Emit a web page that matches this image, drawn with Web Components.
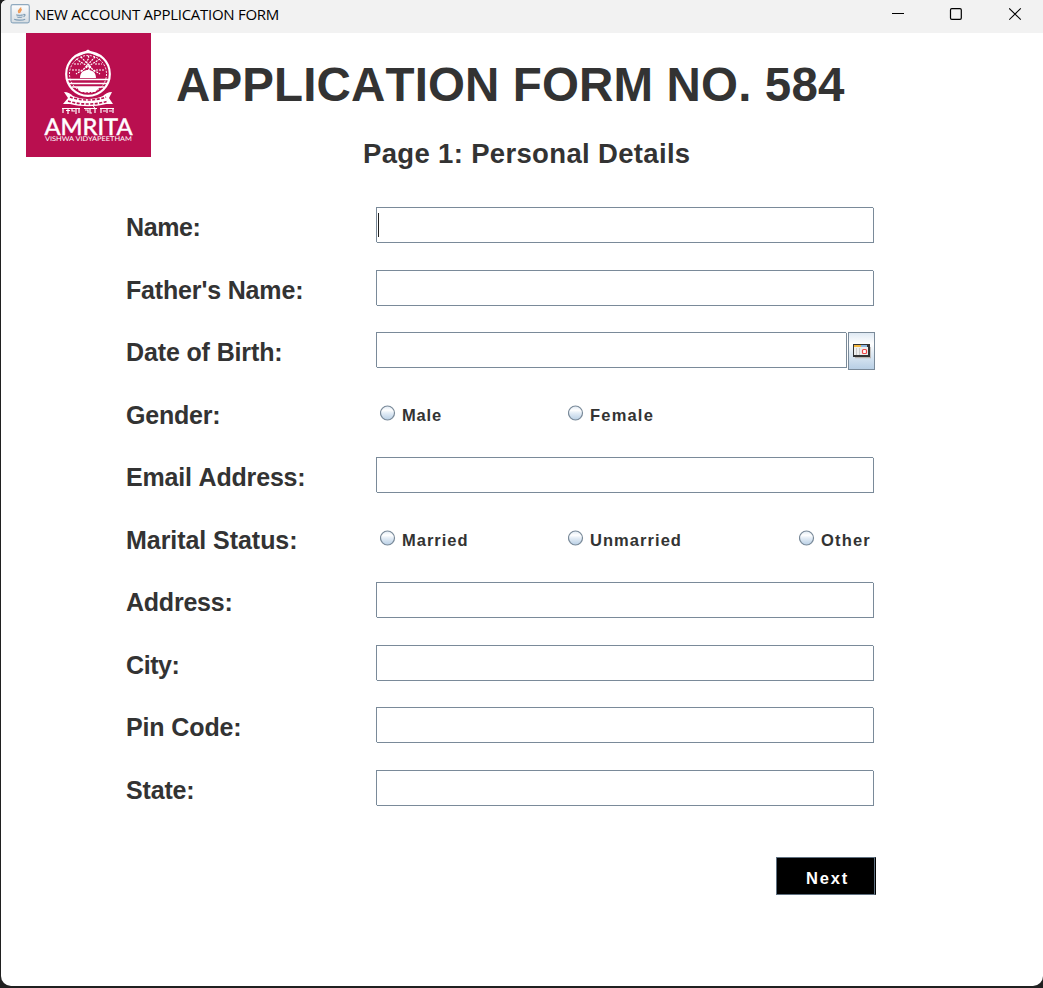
<!DOCTYPE html>
<html lang="en">
<head>
<meta charset="utf-8">
<title>NEW ACCOUNT APPLICATION FORM</title>
<style>
html,body{margin:0;height:100%;background:#202020;overflow:hidden}
body{font-family:"Liberation Sans",Arial,sans-serif;color:#333}
</style>
</head>
<body>
<app-window></app-window>
<script>
const define = (name, html, setup) => customElements.define(name, class extends HTMLElement {
  connectedCallback() {
    if (this.shadowRoot) return;
    const t = document.createElement('template');
    t.innerHTML = typeof html === 'function' ? html(this) : html;
    this.attachShadow({mode: 'open'}).append(t.content.cloneNode(true));
    if (setup) setup(this);
  }
});

/* Text tracked so that its advance equals the width attribute. */
define('tracked-text', `<style>:host{display:block;white-space:pre;font-kerning:none;font-weight:bold}span{display:inline-block}</style><span><slot></slot></span>`, el => {
  const s = el.shadowRoot.querySelector('span');
  const w = s.getBoundingClientRect().width;
  s.style.letterSpacing = ((+el.getAttribute('width') - w) / el.textContent.length).toFixed(3) + 'px';
});

define('java-icon', `<style>:host{display:block;width:20px;height:20px}svg{display:block}</style>
<svg width="20" height="20" viewBox="0 0 20 20" fill="none">
<defs><linearGradient id="g" x2="0" y2="1"><stop stop-color="#fdfdfd"/><stop offset="1" stop-color="#d5dce2"/></linearGradient></defs>
<rect x="1" y=".7" width="18.3" height="18.2" rx="1.8" fill="url(#g)" stroke="#8fa9bf" stroke-width="1.2"/>
<path d="M10.600 3.500c.8 1.800-3 2.600-2 4.400.3.600.6.800.7 1.200M11.800 5.500c-2 1-2 1.600-1.200 2.800" stroke="#ee9a55" stroke-width="1.500"/>
<path d="M6 10.300c1.700.6 5.500.5 7 0l-.8 3.200c-1.300.7-3.700.7-5 0z" fill="#8ba6bb"/>
<path d="M6.500 12.200c1.500.5 4.500.4 6 0" stroke="#dfe6ec" stroke-width=".8"/>
<path d="M4.200 15.300c2.500 1.200 8.500 1.100 11-.1M13.300 10.600c2-.7 2.600 1 .2 2" stroke="#7f9db5" stroke-width="1.200"/>
</svg>`);

define('window-bar', `<style>
:host{display:flex;height:33px;background:#f2f2f2;align-items:flex-start;box-sizing:border-box;padding:4px 21px 0 9px}
.t{font:15px/20px "Open Sans","Noto Sans",sans-serif;color:#000;margin-left:5px;flex:1}
tracked-text{font-weight:400}
svg{display:block}.c{display:flex;margin-top:4px}
svg+svg{margin-left:44px}svg:last-child{margin-left:47px}
</style>
<java-icon></java-icon><div class="t"><tracked-text width="244">NEW ACCOUNT APPLICATION FORM</tracked-text></div>
<div class="c">
<svg width="13" height="13"><path d="M0 5.500h12" stroke="#000"/></svg>
<svg width="13" height="13"><rect x="1.500" y=".6" width="10.800" height="10.800" rx="1.300" fill="none" stroke="#000" stroke-width="1.200"/></svg>
<svg width="13" height="13"><path d="M.2.400l11.600 11.300M11.800.400L.2 11.700" stroke="#000" stroke-width="1.100"/></svg>
</div>`);

define('amrita-logo', `<style>:host{display:block;width:125px;height:124px;background:#b90f4f}svg{display:block}</style>
<svg width="125" height="124" viewBox="0 0 125 124" fill="none" stroke="#fff">
<circle cx="62" cy="41" r="21.800" stroke-width="2.200"/>
<circle cx="62" cy="41" r="18.500" stroke-width="1" stroke-dasharray="2 1.400"/>
<path d="M51 23l7-3 4-2.500 4 2.500 7 3" stroke-width="1.800"/>
<path d="M62 23c3 3-4 5 0 8s3 4 0 6M50 26l24 15M74 26L50 41M55 24l14 15M69 24L55 39M46 37h8M70 37h8M48 31h7M69 31h7" stroke-width="1.200" stroke-dasharray="2 1"/>
<path d="M54 45c0-6 4-8 8-8s8 2 8 8zM50 54h24l-5 5H55z" fill="#fff" stroke="none"/>
<path d="M42 46.500h40M42 50.500h40M46 54h32" stroke-width="1.500"/>
<path d="M38 59c4 0 7 2 9 4 8 4 22 4 30 0 2-2 5-4 9-4l-3 6 4 6h-7c-11 3-25 3-36 0h-7l5-6z" fill="#fff" stroke="none"/>
<path d="M42 68c12 4 28 4 40 0M44 64c10 4 26 4 36 0" stroke="#b90f4f" stroke-width="1.600" stroke-dasharray="3 1.500"/>
<path d="M36 75.500h18M58 75.500h13M74 75.500h14M67 72.500l2 3" stroke-width="1"/>
<path d="M37 76v4M40 77.500h4M42 76v5M46 76v2h3M50 76v5M53 76v4M59 77h3v3M64 76v4h2M69 76v4M75 76v4M77 78h3M81 76v4M83 78h3M87 76v4" stroke-width="1.200"/>
<g fill="#fff" text-rendering="geometricPrecision">
<text x="18.500" y="102" textLength="88" lengthAdjust="spacingAndGlyphs" font-family="Lato,sans-serif" font-size="23" stroke-width=".5">AMRITA</text>
<text x="19" y="108.300" textLength="87" lengthAdjust="spacingAndGlyphs" font-family="Lato,sans-serif" font-size="6.500" stroke="none">VISHWA VIDYAPEETHAM</text></g>
</svg>`);

define('text-field', `<style>
:host{display:block;position:relative;box-sizing:border-box;width:498px;height:36px;border:1px solid #7a8a99;background:#fff;padding:5px 1px}
:host::before,:host::after{content:"";position:absolute;width:1px;height:1px;background:#eef1f4}
:host::before{right:-1px;top:-1px}:host::after{left:-1px;bottom:-1px}
i{display:none;width:1px;height:24px;background:#222}:host([focused]) i{display:block}
</style><i></i>`);

define('calendar-button', `<style>
:host{display:flex;box-sizing:border-box;width:27px;height:38px;border:1px solid #7a8a99;background:linear-gradient(#dfe9f3,#fff 30%,#e2ecf5 55%,#b8cfe5);align-items:center;justify-content:center}
svg{display:block;margin-top:1px}
</style>
<svg width="18" height="15"><path d="M2 13.500h16V3" stroke="#b9b4b0" fill="none" stroke-width="1.500"/><path d="M0 0h17v13H0z" fill="#333"/><path d="M1 3h14v8H1z" fill="#eee"/><path d="M1 1h7v2H1z" fill="#f3b73f"/><path d="M8 1h6v2H8z" fill="#8db6df"/><path d="M3.500 4v7M6.500 4v7" stroke="#ccc"/><rect x="9.500" y="5.500" width="4" height="4" rx="1" fill="#fff" stroke="#f04848" stroke-width="1.200"/></svg>`);

define('radio-option', el => `<style>
:host{display:flex;align-items:center;gap:6px;font-size:16.500px;line-height:20px}
svg{display:block;margin-top:-3px}
</style>
<svg width="16" height="16"><defs><linearGradient id="r" x2="0" y2="1"><stop stop-color="#dde8f3"/><stop offset=".3" stop-color="#fff"/><stop offset=".5" stop-color="#e4edf6"/><stop offset="1" stop-color="#b8cfe5"/></linearGradient></defs><circle cx="7.500" cy="8" r="7" fill="url(#r)" stroke="#7a8a99" stroke-width="1.200"/></svg>
<tracked-text width="${el.getAttribute('width')}">${el.getAttribute('label')}</tracked-text>`);

define('form-row', el => `<style>
:host{display:grid;grid-template-columns:250px 1fr;height:36px}
.l{font-size:25px;line-height:28px;padding-top:6px}
.f{display:flex}
</style><div class="l"><tracked-text width="${el.getAttribute('width')}">${el.getAttribute('label')}</tracked-text></div><div class="f"><slot></slot></div>`);

define('next-button', `<style>
:host{display:flex;box-sizing:border-box;width:100px;height:38px;background:#000;border:1px solid #5f7080;border-right:1px solid #000;box-shadow:inset -1px 0 #5f7080;color:#fff;font-size:16.500px;line-height:20px;padding:10px 0 0 29px}
</style><tracked-text width="43">Next</tracked-text>`);

define('app-window', `<style>
:host{display:flex;flex-direction:column;box-sizing:border-box;margin-left:1px;height:986px;background:#fff;border-radius:6px 0 10px 10px;overflow:hidden}
header{display:flex;gap:25px;padding-left:25px;height:124px}
.h{display:flex;flex-direction:column}
h1{margin:25px 0 0;font-size:47.500px;line-height:54px}
h2{margin:26px 0 0 187px;font-size:27.500px;line-height:32px}
main{display:grid;row-gap:26.550px;padding:50px 0 0 125px;width:750px}
.rad{display:grid;grid-template-columns:188px 231px auto;margin:4px 0 0 4px}
text-field.d{width:471px}calendar-button{margin-left:1px}
.n{display:flex;margin:51px 0 0 775px}
</style>
<window-bar></window-bar>
<header><amrita-logo></amrita-logo><div class="h"><h1><tracked-text width="668.500">APPLICATION FORM NO. 584</tracked-text></h1><h2><tracked-text width="327.500">Page 1: Personal Details</tracked-text></h2></div></header>
<main>
<form-row label="Name:" width="74.500"><text-field focused></text-field></form-row>
<form-row label="Father's Name:" width="177.300"><text-field></text-field></form-row>
<form-row label="Date of Birth:" width="156.500"><text-field class="d"></text-field><calendar-button></calendar-button></form-row>
<form-row label="Gender:" width="94.500"><div class="rad"><radio-option label="Male" width="40"></radio-option><radio-option label="Female" width="64"></radio-option></div></form-row>
<form-row label="Email Address:" width="179.500"><text-field></text-field></form-row>
<form-row label="Marital Status:" width="171.500"><div class="rad"><radio-option label="Married" width="66.500"></radio-option><radio-option label="Unmarried" width="92"></radio-option><radio-option label="Other" width="50"></radio-option></div></form-row>
<form-row label="Address:" width="106.500"><text-field></text-field></form-row>
<form-row label="City:" width="53.500"><text-field></text-field></form-row>
<form-row label="Pin Code:" width="115.500"><text-field></text-field></form-row>
<form-row label="State:" width="68.500"><text-field></text-field></form-row>
</main>
<div class="n"><next-button></next-button></div>`);
</script>
</body>
</html>
